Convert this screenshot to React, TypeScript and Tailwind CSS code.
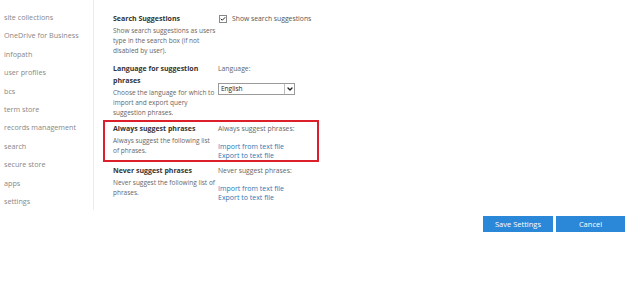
import { Check, ChevronDown } from "lucide-react";

const navItems = [
  "site collections",
  "OneDrive for Business",
  "infopath",
  "user profiles",
  "bcs",
  "term store",
  "records management",
  "search",
  "secure store",
  "apps",
  "settings",
];

const font = "font-['Open_Sans','Liberation_Sans',sans-serif]";

function Heading({ children }: { children: React.ReactNode }) {
  return <div className="text-[7px] leading-[12px] font-bold text-[#333]">{children}</div>;
}

function Desc({ children }: { children: React.ReactNode }) {
  return <div className="mt-[1px] text-[6.5px] leading-[10px] text-[#666]">{children}</div>;
}

function Links() {
  return (
    <div className="text-[7px] leading-[9px] text-[#2a7ab8]">
      <div>Import from text file</div>
      <div>Export to text file</div>
    </div>
  );
}

export default function App() {
  return (
    <div className={`${font} w-[625px] h-[307px] bg-white flex overflow-hidden`}>
      {/* left nav */}
      <div className="w-[94px] h-[210px] border-r border-[#ececec] pt-[8px] pl-[4px] shrink-0">
        {navItems.map((item) => (
          <div key={item} className="text-[7.2px] leading-[18.4px] text-[#888]">
            {item}
          </div>
        ))}
      </div>

      <div className="flex-1 flex flex-col">
        <div className="ml-[9px] w-[216px]">
          {/* search suggestions */}
          <div className="flex border-2 border-transparent pt-[11px] pb-[2px] pl-[8px]">
            <div className="w-[105px]">
              <Heading>Search Suggestions</Heading>
              <Desc>
                Show search suggestions as users
                <br />
                type in the search box (if not
                <br />
                disabled by user).
              </Desc>
            </div>
            <div className="flex items-center gap-[5px] h-[12px] pl-[1px]">
              <div className="w-[8px] h-[8px] border border-[#888] flex items-center justify-center bg-white">
                <Check className="w-[8px] h-[8px] text-[#222]" strokeWidth={4} />
              </div>
              <span className="text-[6.8px] text-[#555]">Show search suggestions</span>
            </div>
          </div>

          {/* language */}
          <div className="flex border-2 border-transparent pt-[1px] pl-[8px]">
            <div className="w-[105px]">
              <Heading>
                Language for suggestion
                <br />
                phrases
              </Heading>
              <Desc>
                Choose the language for which to
                <br />
                import and export query
                <br />
                suggestion phrases.
              </Desc>
            </div>
            <div>
              <div className="text-[6.8px] leading-[12px] text-[#666]">Language:</div>
              <div className="mt-[8px] w-[77px] h-[12px] border border-[#9a9a9a] flex items-center justify-between pl-[2px] bg-white">
                <span className="text-[6.5px] text-[#222]">English</span>
                <div className="w-[10px] h-[10px] border-l border-[#bbb] flex items-center justify-center">
                  <ChevronDown className="w-[8px] h-[8px] text-[#222]" strokeWidth={4} />
                </div>
              </div>
            </div>
          </div>

          {/* always suggest */}
          <div className="flex border-2 border-[#dc1f2b] pt-[1px] pl-[8px]">
            <div className="w-[105px]">
              <Heading>Always suggest phrases</Heading>
              <Desc>
                Always suggest the following list
                <br />
                of phrases.
              </Desc>
            </div>
            <div>
              <div className="text-[6.8px] leading-[12px] text-[#666]">Always suggest phrases:</div>
              <div className="mt-[7px]">
                <Links />
              </div>
            </div>
          </div>

          {/* never suggest */}
          <div className="flex border-2 border-transparent pt-[1px] pl-[8px]">
            <div className="w-[105px]">
              <Heading>Never suggest phrases</Heading>
              <Desc>
                Never suggest the following list of
                <br />
                phrases.
              </Desc>
            </div>
            <div>
              <div className="text-[6.8px] leading-[12px] text-[#666]">Never suggest phrases:</div>
              <div className="mt-[7px]">
                <Links />
              </div>
            </div>
          </div>
        </div>

        <div className="mt-[12px] flex justify-end gap-[3px]">
          <button className="w-[70px] h-[16px] bg-[#2b88d8] text-white text-[7.5px] leading-[16px]">
            Save Settings
          </button>
          <button className="w-[69px] h-[16px] bg-[#2b88d8] text-white text-[7.5px] leading-[16px]">
            Cancel
          </button>
        </div>
      </div>
    </div>
  );
}
